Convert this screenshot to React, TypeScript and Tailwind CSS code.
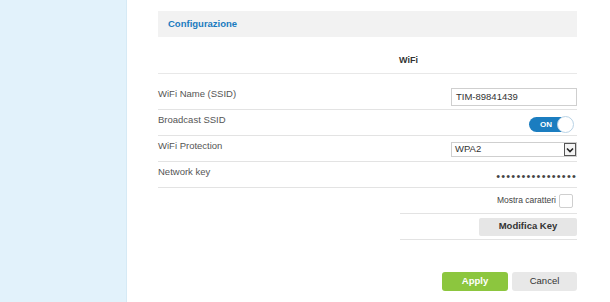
import React from "react";

const font = { fontFamily: '"Liberation Sans", Arial, sans-serif' };

function Toggle() {
  return (
    <div className="relative w-[44px] h-[15px] rounded-full bg-[#1b7dc0] flex items-center">
      <span className="pl-[11px] text-[8px] font-bold text-white leading-none">ON</span>
      <div className="absolute right-[-1px] top-[-1px] w-[17px] h-[17px] rounded-full bg-white border border-[#b9d3e6]" />
    </div>
  );
}

function Row({ label, children }: { label: string; children: React.ReactNode }) {
  return (
    <div className="flex h-[26px] border-b border-[#e3e3e3]">
      <div className="pt-[4px] text-[9.5px] leading-[12px] text-[#555]">{label}</div>
      <div className="ml-auto flex items-center">{children}</div>
    </div>
  );
}

export default function App() {
  return (
    <div className="flex w-[610px] h-[302px] bg-white overflow-hidden" style={font}>
      {/* sidebar */}
      <div className="w-[127px] h-full shrink-0 bg-[#e2f2fb] border-r border-[#d6eaf5]" />

      <div className="w-[419px] ml-[31px] pt-[11px]">
        {/* header */}
        <div className="h-[26px] bg-[#f2f2f2] flex items-center px-[10px]">
          <span className="text-[9.5px] font-bold text-[#1a7bbf]">Configurazione</span>
        </div>

        {/* section title */}
        <div className="h-[37px] pt-[17px] pl-[241px] border-b border-[#e8e8e8]">
          <span className="text-[9px] leading-[12px] font-bold text-[#333] block">WiFi</span>
        </div>

        {/* WiFi name */}
        <div className="flex h-[36px] pt-[14px] border-b border-[#e3e3e3]">
          <div className="text-[9.5px] leading-[12px] text-[#555]">WiFi Name (SSID)</div>
          <div className="ml-auto w-[126px] h-[18px] border border-[#cfcfcf] flex items-center px-[4px]">
            <span className="text-[9.5px] text-[#333]">TIM-89841439</span>
          </div>
        </div>

        <Row label="Broadcast SSID">
          <div className="pr-[4px] pt-[4px]">
            <Toggle />
          </div>
        </Row>

        <Row label="WiFi Protection">
          <div className="w-[126px] h-[15px] border border-[#cfcfcf] flex items-center pl-[3px] mt-[2px]">
            <span className="text-[9.5px] text-[#333]">WPA2</span>
            <div className="ml-auto w-[12px] h-[13px] border border-[#555] bg-[#f4f4f4] flex items-center justify-center">
              <svg width="8" height="6" viewBox="0 0 8 6">
                <path d="M1 1.5 L4 4.5 L7 1.5" fill="none" stroke="#222" strokeWidth="1.6" />
              </svg>
            </div>
          </div>
        </Row>

        <Row label="Network key">
          <span className="text-[11px] tracking-[1.2px] text-[#444] pt-[4px]">••••••••••••••••</span>
        </Row>

        <div className="ml-[242px]">
          <div className="flex h-[26px] items-center justify-end border-b border-[#e3e3e3]">
            <span className="text-[8.5px] text-[#444] mr-[3px]">Mostra caratteri</span>
            <div className="w-[14px] h-[14px] rounded-[2px] border border-[#cfcfcf] bg-white mr-[4px]" />
          </div>
          <div className="flex h-[26px] items-center justify-end border-b border-[#e3e3e3]">
            <div className="w-[98px] h-[18px] rounded-[2px] bg-[#e6e6e6] flex items-center justify-center">
              <span className="text-[9.5px] font-bold text-[#333]">Modifica Key</span>
            </div>
          </div>
        </div>

        <div className="flex justify-end gap-[4px] mt-[32px]">
          <div className="w-[66px] h-[19px] rounded-[3px] bg-[#8cc63e] flex items-center justify-center">
            <span className="text-[9.5px] font-bold text-white">Apply</span>
          </div>
          <div className="w-[65px] h-[19px] rounded-[3px] bg-[#e8e8e8] flex items-center justify-center">
            <span className="text-[9.5px] text-[#333]">Cancel</span>
          </div>
        </div>
      </div>
    </div>
  );
}
